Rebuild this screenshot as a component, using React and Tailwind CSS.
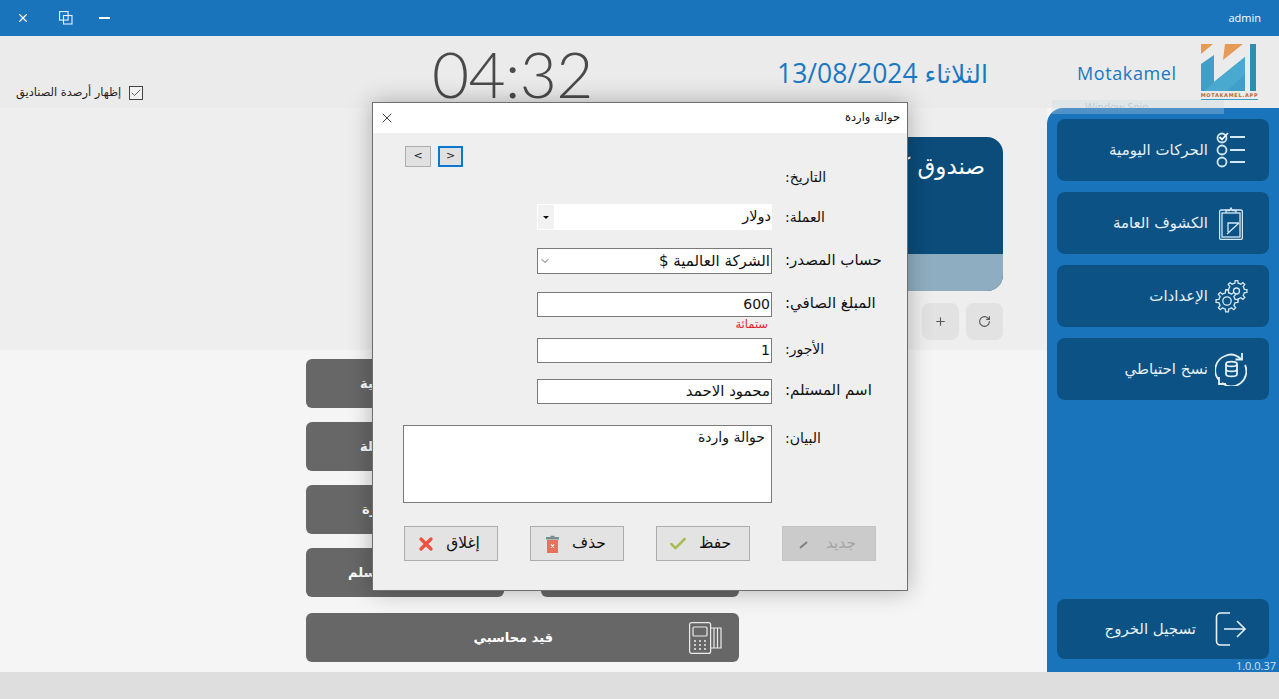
import React from "react";
import { Check, X, Plus, RotateCw, ChevronDown } from "lucide-react";

const arabic = { fontFamily: '"DejaVu Sans", sans-serif' };
const latin = { fontFamily: '"Open Sans", sans-serif' };

function gearPath(cx, cy, inner, outer, teeth) {
  let d = "";
  const step = (Math.PI * 2) / teeth;
  for (let i = 0; i < teeth; i++) {
    const a = i * step;
    const pts = [
      [inner, a - step * 0.5],
      [inner, a - step * 0.26],
      [outer, a - step * 0.16],
      [outer, a + step * 0.16],
      [inner, a + step * 0.26],
    ];
    pts.forEach(([r, t], j) => {
      const x = (cx + r * Math.cos(t)).toFixed(2);
      const y = (cy + r * Math.sin(t)).toFixed(2);
      d += (i === 0 && j === 0 ? "M" : "L") + x + " " + y + " ";
    });
  }
  return d + "Z";
}

const ListIcon = () => (
  <svg width="30" height="36" viewBox="0 0 30 36" fill="none" stroke="#d5e8f5" strokeWidth="1.8">
    <circle cx="6" cy="6" r="4.500" />
    <path d="M3.500 5l2.500 2.500 6-6.500" stroke="#ffffff" />
    <circle cx="6" cy="18" r="4.500" />
    <circle cx="6" cy="30" r="4.500" />
    <path d="M14 5h15M14 18h15M14 30h15" />
  </svg>
);

const ClipboardIcon = () => (
  <svg width="24" height="33" viewBox="0 0 24 33" fill="none" stroke="#d5e8f5" strokeWidth="1.300">
    <rect x="0.600" y="3" width="22.800" height="29.400" rx="1.500" />
    <rect x="3" y="6" width="18" height="24" />
    <path d="M7 6V3.500h3.500L12 1l1.500 2.500H17V6" />
    <path d="M9 25V16h11M8 27l12-11" />
  </svg>
);

const GearsIcon = () => (
  <svg width="33" height="33" viewBox="0 0 33 33" fill="none" stroke="#d5e8f5" strokeWidth="1.300">
    <path d={gearPath(21.500, 11, 8, 10.500, 8)} />
    <circle cx="21.500" cy="11" r="3" />
    <path d={gearPath(12, 21, 8.200, 11, 8)} fill="#0c5285" />
    <circle cx="12" cy="21" r="4.200" />
  </svg>
);

const BackupIcon = () => (
  <svg width="32" height="34" viewBox="0 0 32 34" fill="none" stroke="#e4f0f8" strokeWidth="1.800">
    <path d="M4 28A15 15 0 0 1 10 4C15 1.500 21 2.500 26 7" />
    <path d="M27 1v6.500h-6.500" />
    <path d="M30 13a15 15 0 0 1-23 18" />
    <path d="M4 25v7h7" />
    <ellipse cx="16.500" cy="12" rx="5.500" ry="2.400" />
    <path d="M11 12v10c0 1.400 2.500 2.400 5.500 2.400s5.500-1 5.500-2.400V12M11 17c0 1.400 2.500 2.400 5.500 2.400s5.500-1 5.500-2.400" />
  </svg>
);

const LogoutIcon = () => (
  <svg width="32" height="34" viewBox="0 0 32 34" fill="none" stroke="#e8f2f9" strokeWidth="1.600">
    <path d="M15 1H6C3 1 1.500 3 1.500 5v24c0 2 1.500 4 4.500 4h9" />
    <path d="M9 17h21M22 9l8 8-8 8" />
  </svg>
);

const PosIcon = () => (
  <svg width="33" height="32" viewBox="0 0 33 32" fill="none" stroke="#ececec" strokeWidth="1.200">
    <rect x="0.600" y="0.600" width="21" height="30.800" rx="2" />
    <rect x="4" y="5" width="14" height="9" rx="1" />
    <path d="M21.600 6H32v20H21.600M25 6v20M28.500 6v20" />
    <path d="M5 19h2M10 19h2M15 19h2M5 23h2M10 23h2M15 23h2M5 27h2M10 27h2M15 27h2" strokeWidth="1.500" />
  </svg>
);

const TrashIcon = () => (
  <svg width="13" height="18" viewBox="0 0 13 18">
    <path d="M4.500 2V0.800h4V2H13v2.500H0V2Z" fill="#7c8b8b" />
    <path d="M1 5h11v13H1Z" fill="#e8725f" />
    <path d="M5 9.500l3 3M8 9.500l-3 3" stroke="#ffffff" strokeWidth="1.100" />
  </svg>
);

const SideButton = ({ icon, label, className }) => (
  <div className={"mx-[10px] h-[62px] rounded-lg bg-[#0c5285] flex items-center justify-end gap-[4px] pr-[19px] " + className}>
    <span dir="rtl" className="text-[15px] text-[#e6f0f7]" style={arabic}>{label}</span>
    <span className="w-[38px] flex justify-center">{icon}</span>
  </div>
);

const ActionButton = ({ label, indent }) => (
  <div className={"h-[49px] w-[198px] rounded-md bg-[#676767] flex items-center text-white text-[13px] font-bold whitespace-nowrap " + indent} style={arabic}>
    <span dir="rtl">{label}</span>
  </div>
);

const DialogButton = ({ label, icon, disabled }) => (
  <div className={"w-[94px] h-[35px] border flex items-center justify-between px-[11px] " + (disabled ? "bg-[#cbcbcb] border-[#c4c4c4] text-[#a4a4a4]" : "bg-[#e3e3e3] border-[#adadad] text-[#111111]")}>
    <span className="w-[20px] flex justify-center">{icon}</span>
    <span dir="rtl" className="text-[15.5px] flex-1 text-center ml-[4px]" style={arabic}>{label}</span>
  </div>
);

const Field = ({ label, top, children, height, labelClass }) => (
  <div className={"flex items-start " + top}>
    <div className={"ml-[164px] w-[235px] shrink-0 " + height}>{children}</div>
    <div dir="rtl" className={"ml-[13px] leading-[20px] text-[#111111] text-left " + (labelClass || "text-[14px]")} style={arabic}>{label}</div>
  </div>
);

const inputBox = "w-full h-full bg-white border border-[#7a7a7a] flex items-center justify-end px-[1px] text-[15px] text-[#111111]";

export default function App() {
  return (
    <div className="relative h-[699px] w-[1279px] overflow-hidden flex flex-col bg-[#f5f5f5]" style={arabic}>
      {/* title bar */}
      <div className="h-[36px] bg-[#1a74bc] flex items-center justify-between pl-[16px] pr-[18px] text-white shrink-0">
        <div className="flex items-center">
          <X size={14} strokeWidth={2} />
          <svg className="ml-[29px]" width="14" height="14" viewBox="0 0 14 14" fill="none" stroke="#e6f1f9" strokeWidth="1.100">
            <rect x="0.600" y="0.600" width="8.500" height="8.500" />
            <rect x="4.500" y="4.500" width="8.500" height="8.500" />
          </svg>
          <div className="ml-[26px] w-[11px] h-[2px] bg-white" />
        </div>
        <span className="text-[11px]" style={latin}>admin</span>
      </div>

      {/* header */}
      <div className="h-[72px] bg-[#ebebeb] shrink-0 relative flex">
        <div className="w-[432px] flex items-end pb-[7px] pl-[16px]">
          <span dir="rtl" className="text-[11.4px] text-[#222222] whitespace-nowrap">إظهار أرصدة الصناديق</span>
          <span className="ml-[8px] mb-[1px] w-[14px] h-[14px] border border-[#444444] bg-[#f2f2f2] flex items-center justify-center">
            <Check size={12} strokeWidth={1.500} color="#333333" />
          </span>
        </div>
        <div className="w-[345px] text-[64px] leading-[76px] font-light text-[#4a4a4a] tracking-[-0.6px]" style={{ fontFamily: "Lato, sans-serif" }}>04:32</div>
        <div className="w-[300px] pt-[20px] text-[26.5px] leading-[34px] text-[#1a78c2] whitespace-nowrap" style={latin}>13/08/2024 <span className="text-[25px]" style={arabic}>الثلاثاء</span></div>
        <div className="pt-[25px] text-[18px] leading-[24px] text-[#1a78c2] tracking-[0.6px]" style={latin}>Motakamel</div>
        <div className="ml-[24px] pt-[8px] w-[57px]">
          <svg className="block" width="56" height="48" viewBox="0 0 56 48">
            <path d="M0 47V20L13 11V38L44 13V47Z" fill="#3f9fc6" />
            <path d="M13 38L44 13V30L26 47H4Z" fill="#4aa9cf" />
            <path d="M0 0H12L0 10Z" fill="#e59a56" />
            <path d="M24 0H42L22 16Z" fill="#e59a56" />
            <path d="M49 0H55V47H49Z" fill="#2f8db3" />
          </svg>
          <div className="text-[5px] leading-[7px] font-bold text-[#b5693a] whitespace-nowrap border-b border-[#3f9fc6] tracking-[0.7px]">MOTAKAMEL.APP</div>
        </div>
      </div>

      {/* body */}
      <div className="flex-1 flex min-h-0">
        <div className="flex-1 flex flex-col">
          <div className="h-[242px] bg-[#eeeeee] flex flex-col items-end pr-[44px] pt-[29px]">
            <div className="w-[430px] h-[154px] rounded-2xl overflow-hidden flex flex-col bg-[#0b4c7b]">
              <div dir="rtl" className="h-[117px] pr-[18px] pt-[12px] text-[23px] text-white">صندوق كاش</div>
              <div className="flex-1 bg-[#8fadc0]" />
            </div>
            <div className="mt-[12px] flex gap-[7px]">
              <div className="w-[37px] h-[37px] rounded-lg bg-[#e2e2e2] flex items-center justify-center"><Plus size={13} color="#555555" /></div>
              <div className="w-[37px] h-[37px] rounded-lg bg-[#e2e2e2] flex items-center justify-center"><RotateCw size={13} color="#555555" /></div>
            </div>
          </div>
          <div className="flex-1 pl-[306px] pt-[9px] flex flex-col">
            <div className="grid grid-cols-[198px_198px] gap-x-[37px] gap-y-[14px]">
              <ActionButton label="حركة يومية" indent="pl-[54px]" />
              <ActionButton label="سند قبض" indent="pl-[60px]" />
              <ActionButton label="شراء عملة" indent="pl-[54px]" />
              <ActionButton label="سند صرف" indent="pl-[60px]" />
              <ActionButton label="حوالة صادرة" indent="pl-[56px]" />
              <ActionButton label="سند دفع" indent="pl-[60px]" />
              <ActionButton label="سند مسلم" indent="pl-[42px]" />
              <ActionButton label="سند تسليم" indent="pl-[60px]" />
            </div>
            <div className="mt-[16px] w-[433px] h-[49px] rounded-md bg-[#676767] flex items-center justify-end pr-[17px] text-white text-[13px] font-bold">
              <span dir="rtl" className="mr-[136px]">قيد محاسبي</span>
              <PosIcon />
            </div>
          </div>
        </div>

        {/* sidebar */}
        <div className="w-[232px] bg-[#1a74bc] rounded-tl-2xl flex flex-col pt-[11px] relative">
          <SideButton icon={<ListIcon />} label="الحركات اليومية" />
          <SideButton className="mt-[11px]" icon={<ClipboardIcon />} label="الكشوف العامة" />
          <SideButton className="mt-[11px]" icon={<GearsIcon />} label="الإعدادات" />
          <SideButton className="mt-[11px]" icon={<BackupIcon />} label="نسخ احتياطي" />
          <div className="mt-auto mx-[10px] h-[60px] rounded-lg bg-[#0c5285] flex items-center justify-end pr-[22px] gap-[19px] mb-[13px]">
            <span dir="rtl" className="text-[15px] text-[#e6f0f7]">تسجيل الخروج</span>
            <LogoutIcon />
          </div>
          <span className="absolute right-[3px] bottom-0 text-[11px] leading-[13px] text-[#cfe2f0]" style={latin}>1.0.0.37</span>
        </div>
      </div>

      {/* status bar */}
      <div className="h-[27px] bg-[#dedede] shrink-0" />

      {/* faint snip tooltip */}
      <div className="absolute left-[1052px] top-[100px] w-[172px] h-[14px] bg-[#c8d6e2]/30 pl-[33px] text-[10.5px] leading-[14px] text-[#7a9cbc]/40" style={latin}>Window Snip</div>

      {/* dialog */}
      <div className="absolute left-[372px] top-[102px] w-[536px] h-[489px] bg-[#efefef] border border-[#6e6e6e] shadow-[0_0_22px_rgba(0,0,0,0.28)]">
        <div className="h-[30px] bg-white flex items-center justify-between pl-[6px] pr-[7px]">
          <X size={16} strokeWidth={1.200} color="#111111" />
          <span dir="rtl" className="text-[11.5px] text-[#111111]">حوالة واردة</span>
        </div>
        <div className="pl-[32px] pt-[13px] flex gap-[7px] h-[34px] box-content">
          <div className="w-[26px] h-[21px] bg-[#e1e1e1] border border-[#adadad] flex items-center justify-center text-[11px] text-[#222222]">&lt;</div>
          <div className="w-[25px] h-[21px] bg-[#e1e1e1] border-2 border-[#0a78d0] flex items-center justify-center text-[11px] text-[#222222]">&gt;</div>
        </div>

        <Field label="التاريخ:" top="mt-[-13px]" height="h-[20px]" />
        <Field label="العملة:" top="mt-[17px]" height="h-[26px]" labelClass="text-[14px] mt-[3px]">
          <div className="w-full h-full bg-white flex items-center">
            <div className="w-[18px] h-full bg-[#f2f2f2] border border-white flex items-center justify-center">
              <div className="w-0 h-0 border-x-[3px] border-x-transparent border-t-[3px] border-t-[#111111]" />
            </div>
            <span dir="rtl" className="flex-1 pr-[1px] text-[14.5px] text-[#111111] text-right">دولار</span>
          </div>
        </Field>
        <Field label="حساب المصدر:" top="mt-[18px]" height="h-[26px]" labelClass="text-[15px] mt-[2px]">
          <div className="w-full h-full bg-white border border-[#7a7a7a] flex items-center pl-[1px] pr-[1px]">
            <ChevronDown size={12} color="#666666" />
            <span dir="rtl" className="flex-1 text-[15px] text-[#111111] text-right">الشركة العالمية $</span>
          </div>
        </Field>
        <Field label="المبلغ الصافي:" top="mt-[18px]" height="h-[25px]" labelClass="text-[15px] mt-[1px]">
          <div className={inputBox + " !text-[14px]"}>600</div>
        </Field>
        <div dir="rtl" className="ml-[356px] w-[39px] text-[11.5px] leading-[13px] mt-[1px] text-[#e8202a] whitespace-nowrap">ستمائة</div>
        <Field label="الأجور:" top="mt-[7px]" height="h-[25px]" labelClass="text-[14px] mt-[1px]">
          <div className={inputBox + " !text-[14px]"}>1</div>
        </Field>
        <Field label="اسم المستلم:" top="mt-[16px]" height="h-[25px]" labelClass="text-[15px] mt-[1px]">
          <div className={inputBox}><span dir="rtl">محمود الاحمد</span></div>
        </Field>
        <div className="mt-[21px] flex items-start">
          <div dir="rtl" className="ml-[30px] w-[369px] h-[78px] bg-white border border-[#7a7a7a] px-[6px] pt-[1px] text-[14px] text-[#111111]">حوالة واردة</div>
          <div dir="rtl" className="ml-[13px] mt-[3px] text-[14px] leading-[20px] text-[#111111]">البيان:</div>
        </div>
        <div className="mt-[23px] ml-[31px] flex gap-[32px]">
          <DialogButton label="إغلاق" icon={<X size={26} strokeWidth={4} color="#f0513f" />} />
          <DialogButton label="حذف" icon={<TrashIcon />} />
          <DialogButton label="حفظ" icon={<Check size={20} strokeWidth={3} color="#a6bd52" />} />
          <DialogButton disabled label="جديد" icon={
            <svg width="10" height="10" viewBox="0 0 10 10" stroke="#7d7d7d" strokeWidth="1.800"><path d="M1 9l7-6" /></svg>
          } />
        </div>
      </div>
    </div>
  );
}
